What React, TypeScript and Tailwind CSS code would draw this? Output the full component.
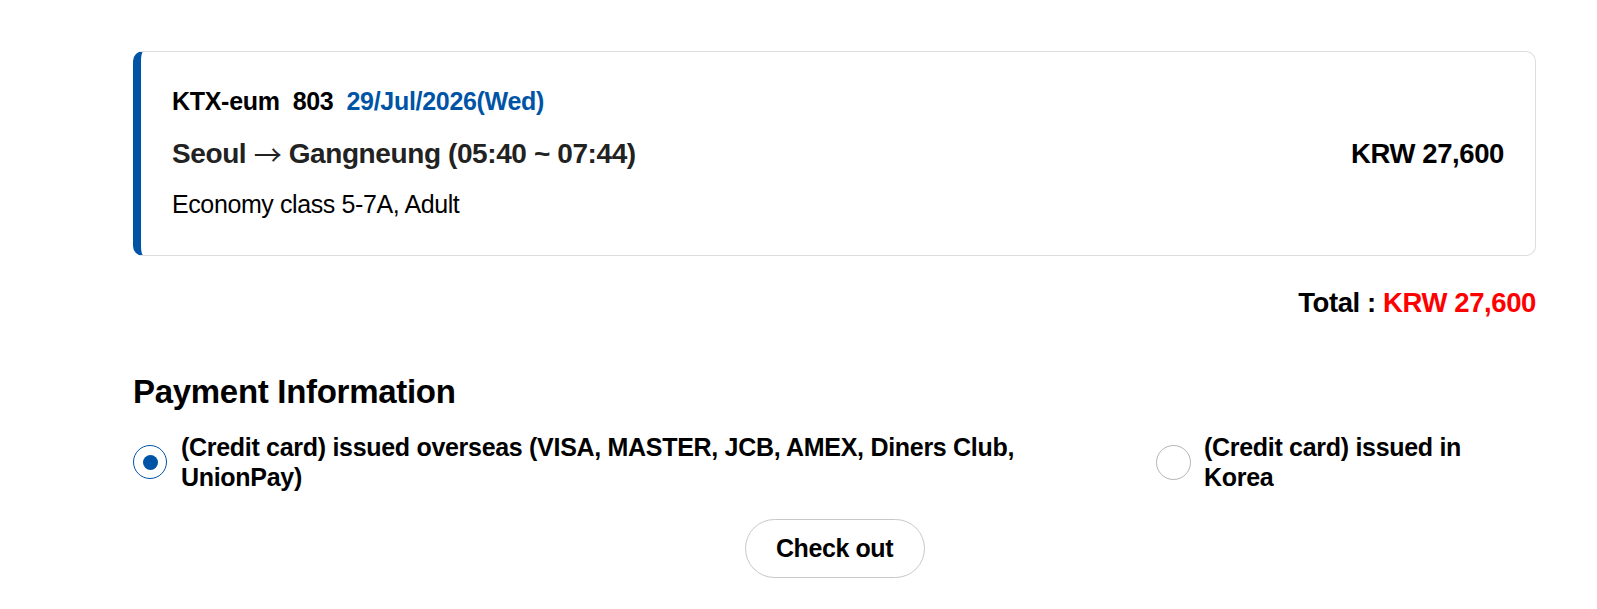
export default function App() {
	return (
		<div
			className="min-h-[609px] w-full bg-white tracking-[-0.4px] text-[#111]"
			style={{ fontFamily: '"Liberation Sans", Arial, sans-serif' }}
		>
			<div className="ml-[133px] w-[1403px] pt-[51px]">
				{/* ticket card */}
				<div className="flex items-center justify-between rounded-[10px] border border-[#dddddd] border-l-[8px] border-l-[#0054a6] pl-[31px] pr-[31px]">
					<div className="pt-[34px] pb-[36px]">
						<div className="flex text-[25px] font-bold leading-[30px] tracking-[-0.3px] text-black">
							<span>KTX-eum</span>
							<span className="ml-[13px]">803</span>
							<span className="ml-[13px] text-[#0054a6]">29/Jul/2026(Wed)</span>
						</div>
						<div className="mt-[21px] h-[32px] text-[28px] font-bold leading-[32px] text-[#222]">
							Seoul{" "}
							<span
								className="relative top-[3px] font-normal leading-none"
								style={{ fontFamily: '"Noto Sans CJK KR", sans-serif' }}
							>
								→
							</span>{" "}
							Gangneung (05:40 ~ 07:44)
						</div>
						<div className="mt-[20px] text-[25px] leading-[30px] text-black">
							Economy class 5-7A, Adult
						</div>
					</div>
					<div className="text-[27.5px] font-bold leading-[32px] text-black">KRW 27,600</div>
				</div>

				<div className="mt-[31px] text-right text-[27.5px] font-bold leading-[32px] text-black">
					Total : <span className="text-[#ff0000]">KRW 27,600</span>
				</div>

				<h2 className="mt-[54px] text-[33px] font-bold leading-[38px] tracking-[-0.3px] text-black">
					Payment Information
				</h2>

				<div className="mt-[21px] flex">
					<label className="flex w-[1023px] items-center gap-[14px]">
						<span className="flex h-[34px] w-[34px] shrink-0 items-center justify-center rounded-full border-[1.5px] border-[#0054a6]">
							<span className="h-[15px] w-[15px] rounded-full bg-[#0054a6]" />
						</span>
						<span className="max-w-[900px] text-[25px] font-bold leading-[30px] tracking-[-0.3px] text-black">
							(Credit card) issued overseas (VISA, MASTER, JCB, AMEX, Diners Club, UnionPay)
						</span>
					</label>
					<label className="flex flex-1 items-center gap-[13px]">
						<span className="h-[35px] w-[35px] shrink-0 rounded-full border border-[#b5b5b5]" />
						<span className="max-w-[290px] text-[25px] font-bold leading-[30px] tracking-[-0.3px] text-black">
							(Credit card) issued in Korea
						</span>
					</label>
				</div>

				<div className="mt-[27px] flex justify-center">
					<button className="h-[59px] w-[180px] rounded-full border border-[#c8c8c8] bg-white text-[25px] font-bold text-black">
						Check out
					</button>
				</div>
			</div>
		</div>
	)
}
